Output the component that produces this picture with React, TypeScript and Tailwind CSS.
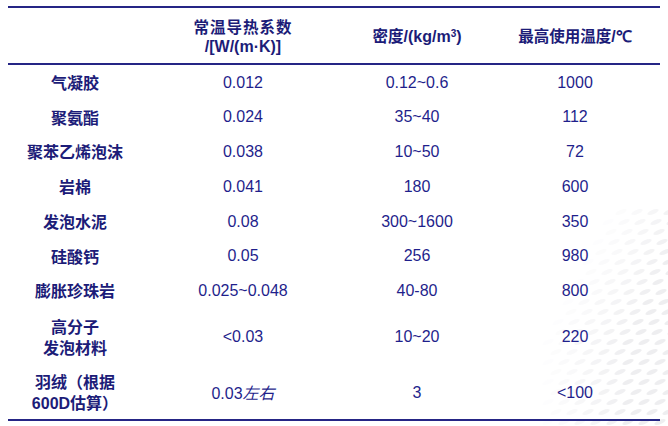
import React from "react";

const navy = "text-[#1c1c78]";
const num = "text-[#1f1f8c]";

type Row = { name: React.ReactNode; k: React.ReactNode; d: string; t: string; h: string };

const rows: Row[] = [
  { name: "气凝胶", k: "0.012", d: "0.12~0.6", t: "1000", h: "h-[35px]" },
  { name: "聚氨酯", k: "0.024", d: "35~40", t: "112", h: "h-[34px]" },
  { name: "聚苯乙烯泡沫", k: "0.038", d: "10~50", t: "72", h: "h-[35px]" },
  { name: "岩棉", k: "0.041", d: "180", t: "600", h: "h-[35px]" },
  { name: "发泡水泥", k: "0.08", d: "300~1600", t: "350", h: "h-[35px]" },
  { name: "硅酸钙", k: "0.05", d: "256", t: "980", h: "h-[34px]" },
  { name: "膨胀珍珠岩", k: "0.025~0.048", d: "40-80", t: "800", h: "h-[35px]" },
  {
    name: (
      <>
        <div>高分子</div>
        <div>发泡材料</div>
      </>
    ),
    k: "<0.03",
    d: "10~20",
    t: "220",
    h: "h-[58px]",
  },
  {
    name: (
      <>
        <div>羽绒（根据</div>
        <div>
          <span className="font-['Liberation_Sans'] font-bold">600D</span>估算）
        </div>
      </>
    ),
    k: (
      <>
        0.03<span className="italic font-['Noto_Sans_CJK_SC']">左右</span>
      </>
    ),
    d: "3",
    t: "<100",
    h: "h-[53px]",
  },
];

function Dots() {
  const items: React.ReactNode[] = [];
  let i = 0;
  for (let y = 212; y < 430; y += 10) {
    const row = (y - 212) / 10;
    const left = Math.max(540, 605 - row * 5);
    const offset = (row % 2) * 8;
    for (let x = left + offset; x < 680; x += 16) {
      const a = Math.min(1, (x - left) / 90) * 0.75;
      items.push(
        <ellipse
          key={i++}
          cx={x}
          cy={y}
          rx={6}
          ry={2.2}
          transform={`rotate(-22 ${x} ${y})`}
          fill="#e8e8eb"
          opacity={a}
        />
      );
    }
  }
  return (
    <svg className="absolute left-0 top-0 pointer-events-none" width={668} height={426}>
      {items}
    </svg>
  );
}

export default function App() {
  return (
    <div className="relative w-[668px] h-[426px] bg-white overflow-hidden font-['Liberation_Sans','Noto_Sans_CJK_SC',sans-serif]">
      <Dots />
      <div className="relative pt-[6px] pl-[8px] w-[660px]">
        <div className="border-t-2 border-b-2 border-[#252585]">
          <div className="flex h-[55px] items-center font-bold text-[15.5px] leading-[19px]">
            <div className="w-[134px]" />
            <div className={`w-[202px] text-center ${navy}`}>
              <div className="font-['Noto_Sans_CJK_SC'] tracking-[1px] leading-[21px]">常温导热系数</div>
              <div className="font-['Liberation_Sans'] text-[16px]">/[W/(m·K)]</div>
            </div>
            <div className={`w-[146px] text-center ${navy} whitespace-nowrap`}>
              <span className="font-['Noto_Sans_CJK_SC']">密度</span>
              <span className="font-['Liberation_Sans'] text-[16px]">
                /(kg/m<sup className="text-[10px]">3</sup>)
              </span>
            </div>
            <div className={`w-[170px] text-center ${navy} whitespace-nowrap`}>
              <span className="font-['Noto_Sans_CJK_SC']">最高使用温度</span>
              <span className="font-['Liberation_Sans'] text-[16px]">/℃</span>
            </div>
          </div>
        </div>
        <div className="border-b-2 border-[#252585]">
          {rows.map((r, idx) => (
            <div key={idx} className={`flex items-center ${r.h} text-[16px]`}>
              <div
                className={`w-[134px] text-center font-['Noto_Sans_CJK_SC'] font-bold leading-[21px] ${navy}`}
              >
                {r.name}
              </div>
              <div className={`w-[202px] text-center ${num}`}>{r.k}</div>
              <div className={`w-[146px] text-center ${num}`}>{r.d}</div>
              <div className={`w-[170px] text-center ${num}`}>{r.t}</div>
            </div>
          ))}
        </div>
      </div>
    </div>
  );
}
